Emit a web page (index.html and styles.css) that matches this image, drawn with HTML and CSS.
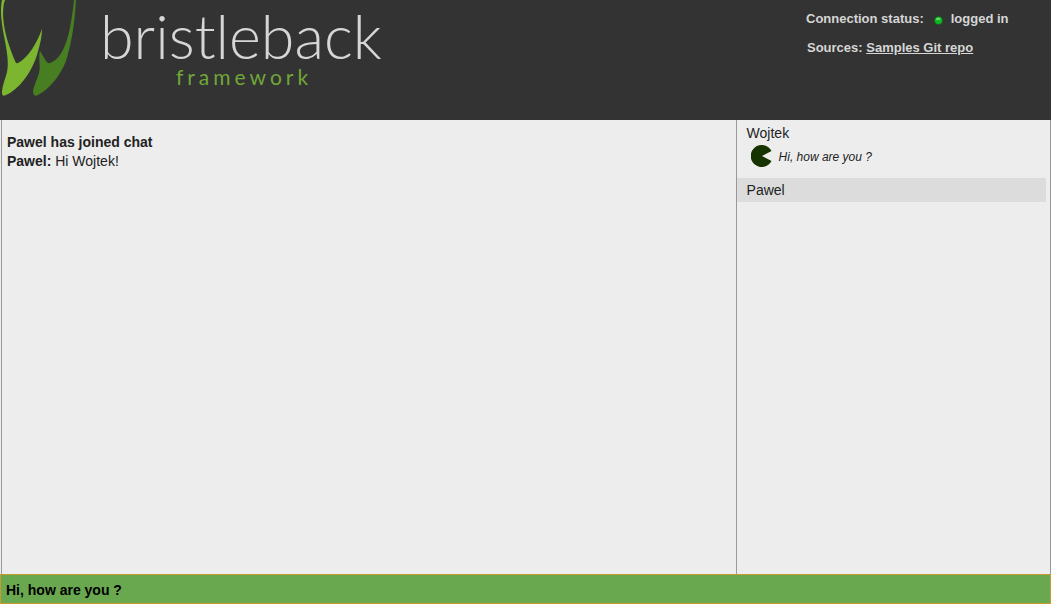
FILE: index.html
```html
<!DOCTYPE html>
<html lang="en">
<head>
<meta charset="utf-8">
<title>Bristleback chat</title>
<link rel="stylesheet" href="styles.css">
</head>
<body>
<header class="header">
  <div class="brand">
    <svg class="brand-mark" width="80" height="100" viewBox="0 0 80 100" aria-hidden="true">
      <path fill="#7cb52f" d="M2 0C0 9 1 20 4 36C7 51 9 63 7 72C5 80 2 86 2 93Q2 97 6 95C18 90 31 74 37 55C40 45 42 36 42 29C37 43 28 58 18 63Q16 64 15 61C9 46 4 33 3 15Q3 5 5 0Z"/>
      <path fill="#487e22" d="M74 0C71 28 66 58 50 63Q48 64 46 61L40 51C38 57 41 66 39 73C37 80 33 87 33 93Q34 97 38 95C50 89 61 74 66 61C72 42 75 20 76 0Z"/>
    </svg>
    <div class="brand-text">
      <span class="brand-name">bristleback</span>
      <span class="brand-sub">framework</span>
    </div>
  </div>
  <div class="info">
    <div class="status">
      <span>Connection status:</span>
      <svg class="status-dot" width="9" height="9" viewBox="0 0 9 9" aria-hidden="true">
        <circle cx="4.5" cy="4.5" r="4.2" fill="#087d12"/>
        <circle cx="4.5" cy="4.5" r="3.5" fill="#12b322"/>
        <ellipse cx="4.2" cy="3" rx="2.3" ry="1.3" fill="#61d869"/>
      </svg>
      <span>logged in</span>
    </div>
    <div class="sources">Sources: <a href="#">Samples Git repo</a></div>
  </div>
</header>
<main class="chat">
  <section class="messages">
    <p><b>Pawel has joined chat</b></p>
    <p><b>Pawel:</b> Hi Wojtek!</p>
  </section>
  <aside class="users">
    <div class="user">
      <div>Wojtek</div>
      <div class="said">
        <svg width="22" height="22" viewBox="0 0 22 22" aria-hidden="true">
          <path fill="#173300" d="M20.5 6A11 11 0 1 0 20.5 16L11 11Z"/>
        </svg>
        <i>Hi, how are you ?</i>
      </div>
    </div>
    <div class="user user-current">Pawel</div>
  </aside>
</main>
<input class="entry" type="text" aria-label="Message" value="Hi, how are you ?">
</body>
</html>
```
FILE: styles.css
```css
* {
  box-sizing: border-box;
}

body {
  margin: 0;
  min-height: 100vh;
  display: flex;
  flex-direction: column;
  background: #ededed;
  color: #222;
  font: 14px/19px "Liberation Sans", Arial, sans-serif;
}

.header {
  display: flex;
  justify-content: space-between;
  height: 120px;
  background: #333;
  color: #d6d6d6;
  font-size: 13px;
  font-weight: bold;
}

.brand {
  display: flex;
  gap: 20px;
}

.brand-text {
  display: flex;
  flex-direction: column;
  padding-top: 5px;
  font-family: Lato, sans-serif;
}

.brand-name {
  font-size: 61px;
  font-weight: 300;
  line-height: 62px;
}

.brand-sub {
  padding-left: 76px;
  color: #70a638;
  font-size: 21px;
  font-weight: 400;
  line-height: 20px;
  letter-spacing: 4px;
}

.info {
  width: 245px;
  padding-top: 9px;
}

.status {
  display: flex;
  align-items: center;
}

.status-dot {
  margin: 3px 8px 0 10px;
}

.sources {
  padding: 10px 0 0 1px;
}

.sources a {
  color: inherit;
}

.chat {
  flex: 1;
  display: grid;
  grid-template-columns: 7fr 3fr;
  margin-left: 1px;
  border: solid #999;
  border-width: 0 1px;
}

.messages {
  padding: 13px 5px;
}

.messages p {
  margin: 0;
}

.users {
  padding-right: 4px;
  border-left: 1px solid #999;
}

.user {
  padding: 4px 10px 11px;
}

.user-current {
  padding: 3px 10px 2px;
  background: #dcdcdc;
}

.said {
  display: flex;
  align-items: center;
  gap: 6px;
  padding: 2px 0 0 4px;
  font-size: 12px;
}

.said i {
  padding-top: 2px;
}

.entry {
  height: 30px;
  padding: 2px 5px 0;
  border: 1px solid #c99a2d;
  border-radius: 0;
  background: #6aa84f;
  color: #000;
  font: bold 14px "Liberation Sans", Arial, sans-serif;
}
```
